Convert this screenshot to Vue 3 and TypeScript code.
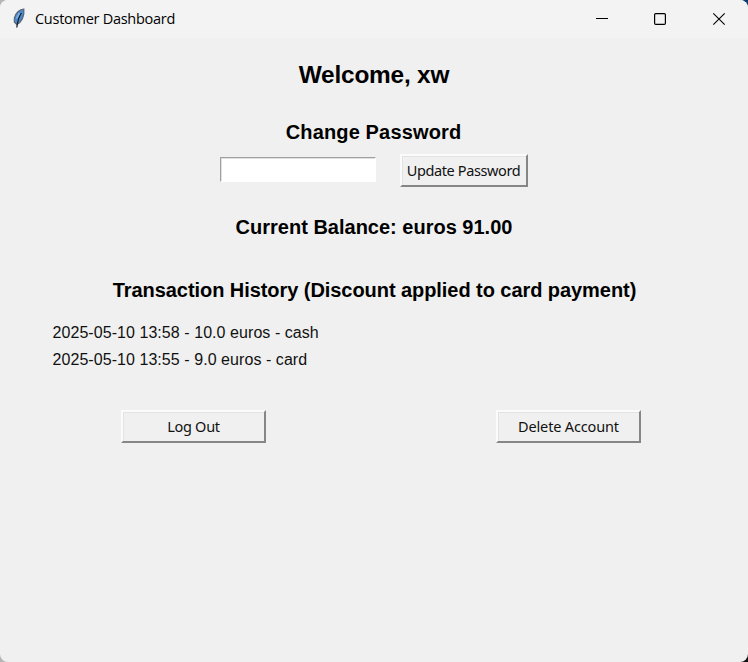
<script setup lang="ts">
import { ref } from 'vue'

interface Transaction {
  date: string
  amount: string
  method: string
}

const username = 'xw'
const balance = '91.00'
const password = ref('')
const transactions: Transaction[] = [
  { date: '2025-05-10 13:58', amount: '10.0', method: 'cash' },
  { date: '2025-05-10 13:55', amount: '9.0', method: 'card' },
]
</script>

<template>
  <div class="desktop">
    <div class="window">
      <header class="titlebar">
        <svg class="feather" width="14" height="22" viewBox="0 0 14 22">
          <path d="M11.8 2C8 2.2 3.8 5.5 2.4 11L2.3 15L4.8 17.5C9.4 15.5 12.8 9 11.8 2Z" fill="#4a8ad0" stroke="#5a6570" stroke-width="1.2" />
          <path d="M9.4 6C7.4 9 5.6 13 4.8 20.5" fill="none" stroke="#15202c" stroke-width="1.3" />
          <path d="M4.6 11.5L7.4 6" stroke="#86b4e4" stroke-width="1.5" />
        </svg>
        <span class="title">Customer Dashboard</span>
        <div class="controls">
          <svg width="58" height="38" viewBox="0 0 58 38"><path d="M22 18.5H34" stroke="#000" /></svg>
          <svg width="58" height="38" viewBox="0 0 58 38"><rect x="22.6" y="13.6" width="10.8" height="10.8" rx="1.2" fill="none" stroke="#000" stroke-width="1.2" /></svg>
          <svg width="58" height="38" viewBox="0 0 58 38"><path d="M23.3 13.3L34.7 24.7M34.7 13.3L23.3 24.7" stroke="#000" stroke-width="1.1" /></svg>
        </div>
      </header>
      <main class="content">
        <h1><span>Welcome, {{ username }}</span></h1>
        <h2 class="change"><span>Change Password</span></h2>
        <form class="password-row" @submit.prevent>
          <input v-model="password" type="password" />
          <button class="update" type="submit"><span>Update Password</span></button>
        </form>
        <h2 class="balance"><span>Current Balance: euros {{ balance }}</span></h2>
        <h2 class="history"><span>Transaction History (Discount applied to card payment)</span></h2>
        <ul>
          <li v-for="t in transactions" :key="t.date"><span>{{ t.date }} - {{ t.amount }} euros - {{ t.method }}</span></li>
        </ul>
        <div class="actions">
          <button class="logout" type="button"><span>Log Out</span></button>
          <button class="delete" type="button"><span>Delete Account</span></button>
        </div>
      </main>
    </div>
  </div>
</template>

<style>
body {
  margin: 0;
}
</style>

<style scoped>
.desktop {
  width: 748px;
  height: 662px;
  overflow: hidden;
  background: linear-gradient(100deg, #b5b5b5 0 50%, transparent 50%), linear-gradient(#0b3c6c 50%, #111 50%);
}
.window {
  height: 662px;
  border-radius: 8px;
  overflow: hidden;
  background: #f0f0f0;
  color: #000;
  font-family: "Liberation Sans", Arial, sans-serif;
}
.titlebar {
  display: flex;
  align-items: center;
  height: 38px;
  background: #f3f3f3;
}
.feather {
  margin-left: 12px;
  margin-top: -2px;
}
.title {
  margin-left: 9px;
  font: 14.5px/20px "Open Sans", "Noto Sans", sans-serif;
  letter-spacing: -0.27px;
  white-space: nowrap;
}
.controls {
  display: flex;
  margin-left: auto;
}
.content {
  display: flex;
  flex-direction: column;
}
h1,
h2 {
  margin: 0;
  text-align: center;
  white-space: nowrap;
  font-weight: bold;
}
h1 {
  margin-top: 22px;
  font-size: 24.4px;
  letter-spacing: -0.2px;
  line-height: 30px;
}
h2 {
  font-size: 20px;
  line-height: 24px;
}
.change {
  margin-top: 30px;
  padding-right: 1px;
  letter-spacing: 0.15px;
}
.password-row {
  display: flex;
  align-items: flex-start;
  margin: 10px 0 0 220px;
}
input {
  box-sizing: border-box;
  width: 156px;
  height: 25px;
  margin: 3px 24px 0 0;
  padding: 0 4px;
  background: #fff;
  border: 1px solid #fff;
  border-top-color: #a0a0a0;
  border-left-color: #a0a0a0;
  border-radius: 0;
  box-shadow: inset 1px 1px #e0e0e0;
  outline: none;
}
button {
  box-sizing: border-box;
  height: 33px;
  padding: 0 0 2px;
  color: #111;
  background: #f0f0f0;
  border: 2px solid;
  border-color: #fbfbfb #868686 #868686 #fbfbfb;
  box-shadow: inset 1px 1px #e3e3e3;
  border-radius: 0;
  font: 14.5px/20px "Noto Sans", "Open Sans", sans-serif;
  letter-spacing: -0.3px;
  white-space: nowrap;
}
.update {
  width: 128px;
  padding-right: 1px;
  letter-spacing: -0.38px;
}
.delete {
  letter-spacing: -0.15px;
}
.balance {
  margin-top: 28px;
}
.history {
  margin-top: 39px;
  padding-left: 1px;
  letter-spacing: -0.06px;
}
ul {
  list-style: none;
  margin: 17px 0 0 52.5px;
  padding: 0;
  font-size: 16px;
  line-height: 27px;
  letter-spacing: 0.06px;
  color: #111;
}
.actions {
  display: flex;
  justify-content: space-between;
  margin: 37px 107px 0 121px;
}
.actions button {
  width: 145px;
}
</style>
